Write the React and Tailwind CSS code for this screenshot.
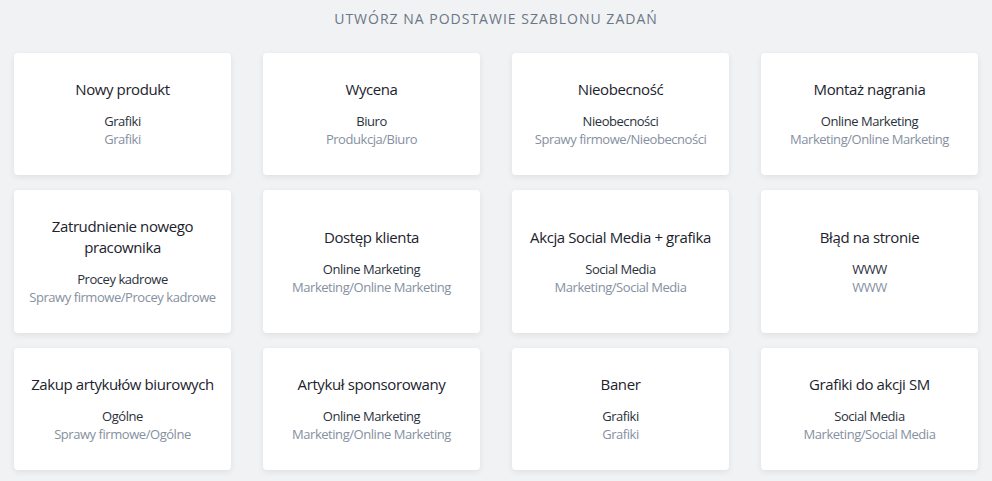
import React from 'react'

const templates = [
  { title: 'Nowy produkt', category: 'Grafiki', path: 'Grafiki' },
  { title: 'Wycena', category: 'Biuro', path: 'Produkcja/Biuro' },
  { title: 'Nieobecność', category: 'Nieobecności', path: 'Sprawy firmowe/Nieobecności' },
  { title: 'Montaż nagrania', category: 'Online Marketing', path: 'Marketing/Online Marketing' },
  { title: 'Zatrudnienie nowego pracownika', category: 'Procey kadrowe', path: 'Sprawy firmowe/Procey kadrowe' },
  { title: 'Dostęp klienta', category: 'Online Marketing', path: 'Marketing/Online Marketing' },
  { title: 'Akcja Social Media + grafika', category: 'Social Media', path: 'Marketing/Social Media' },
  { title: 'Błąd na stronie', category: 'WWW', path: 'WWW' },
  { title: 'Zakup artykułów biurowych', category: 'Ogólne', path: 'Sprawy firmowe/Ogólne' },
  { title: 'Artykuł sponsorowany', category: 'Online Marketing', path: 'Marketing/Online Marketing' },
  { title: 'Baner', category: 'Grafiki', path: 'Grafiki' },
  { title: 'Grafiki do akcji SM', category: 'Social Media', path: 'Marketing/Social Media' },
]

function TemplateCard({ title, category, path }) {
  return (
    <div className="bg-white rounded-[4px] shadow-[0_2px_6px_rgba(0,0,0,0.08)] px-[10px] pt-[26px] pb-[27px] flex flex-col items-center justify-center text-center">
      <h3 className="text-[15px] leading-[21px] tracking-[-0.4px] text-[#1c232d]">{title}</h3>
      <p className="mt-[12px] text-[13px] leading-[18px] tracking-[-0.45px] text-[#2a313b]">{category}</p>
      <p className="text-[13px] leading-[18px] tracking-[-0.45px] text-[#86909f]">{path}</p>
    </div>
  )
}

export default function App() {
  return (
    <div className="min-h-screen bg-[#f1f2f4] px-[14px] pb-4 font-['Open_Sans',sans-serif]">
      <h2 className="pt-[9px] pb-[25px] text-center text-[14px] leading-[19px] tracking-[1px] uppercase text-[#6b7685]">
        Utwórz na podstawie szablonu zadań
      </h2>
      <div className="grid grid-cols-4 gap-x-8 gap-y-[15px]">
        {templates.map(t => (
          <TemplateCard key={t.title} {...t} />
        ))}
      </div>
    </div>
  )
}
